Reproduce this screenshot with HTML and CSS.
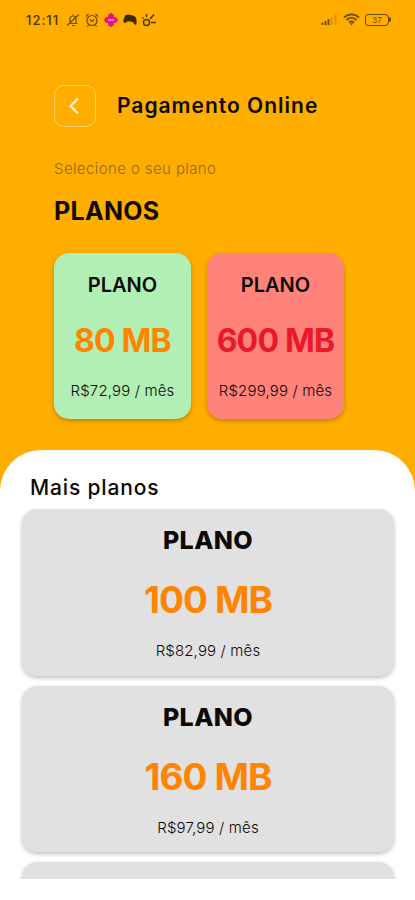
FILE: index.html
```html
<!DOCTYPE html>
<html lang="pt-BR">
<head>
    <meta charset="UTF-8">
    <meta name="viewport" content="width=device-width, initial-scale=1.0">
    <title>Pagamento Online</title>
    <link rel="stylesheet" href="styles.css">
</head>
<body>
    <div class="status">
        <span class="time">12:11</span>
        <svg class="bell" width="14" height="14" viewBox="0 0 14 14">
            <path d="M3 10.5h8.5M4 10V6a3 3 0 0 1 6 0v4M6 12.5h2.5M7 3V1.5M1 12.5L13 1.5"/>
        </svg>
        <svg class="alarm" width="14" height="14" viewBox="0 0 14 14">
            <circle cx="7" cy="7.5" r="5"/>
            <path d="M4.8 6.5L7 8.5l2.2-2M1 3.5L3.5 1M13 3.5L10.5 1M3.5 12l-1 1.5M10.5 12l1 1.5"/>
        </svg>
        <svg class="flower" width="14" height="14" viewBox="0 0 14 14">
            <path class="pink" d="M7 0l2.5 1.5.5 2.5 2.5.5L14 7l-1.5 2.5-2.5.5-.5 2.5L7 14l-2.5-1.5L4 10l-2.500-.5L0 7l1.500-2.500L4 4l.5-2.500z"/>
            <path class="mark" d="M4 7.500l1.500-1 1.500 1 1.500-1 1.500 1"/>
        </svg>
        <svg class="game" width="14" height="12" viewBox="0 0 14 12">
            <path d="M2 1.500L5 .5l5 1 2.500 1.500c1.200 2.300 1.500 5 .8 7.500-1.500.5-2.500-.5-3.300-2.500L5 7.300 2 9C.6 9 .2 8 .4 6.500z"/>
        </svg>
        <svg class="spark" width="14" height="14" viewBox="0 0 14 14">
            <circle cx="4.500" cy="9.500" r="3"/>
            <path d="M4.500 4V1M8 6l4-4.500M9 9.500h5M1.500 5.500L.5 4.500"/>
        </svg>
        <svg class="signal" width="16" height="11" viewBox="0 0 16 11">
            <path d="M1.500 11V8.500M4.500 11V7M7.500 11V5"/>
            <path class="off" d="M10.500 11V3M14.500 11V.5"/>
        </svg>
        <svg class="wifi" width="17" height="13" viewBox="0 0 17 13">
            <path d="M1 4.500c4.500-4.300 10.500-4.300 15 0M3.500 7c3-2.800 7-2.800 10 0M6 9.500c1.500-1.500 3.500-1.500 5 0"/>
            <path class="dot" d="M6.700 10.200h3.600L8.500 12.500z"/>
        </svg>
        <div class="battery"><span>37</span></div>
        <span class="tip"></span>
    </div>

    <div class="top">
        <div class="header">
            <button class="back" aria-label="Voltar">
                <svg width="12" height="18" viewBox="0 0 12 18"><path d="M10 1.500L2.500 9l7.500 7.500"/></svg>
            </button>
            <h1>Pagamento Online</h1>
        </div>
        <p class="hint">Selecione o seu plano</p>
        <h2>PLANOS</h2>
        <div class="cards">
            <div class="card green">
                <p class="name">PLANO</p>
                <p class="speed">80 MB</p>
                <p class="price">R$72,99 / mês</p>
            </div>
            <div class="card red">
                <p class="name">PLANO</p>
                <p class="speed">600 MB</p>
                <p class="price">R$299,99 / mês</p>
            </div>
        </div>
    </div>

    <div class="more">
        <h3>Mais planos</h3>
        <div class="list">
            <div class="plan">
                <p class="name">PLANO</p>
                <p class="speed">100 MB</p>
                <p class="price">R$82,99 / mês</p>
            </div>
            <div class="plan">
                <p class="name">PLANO</p>
                <p class="speed">160 MB</p>
                <p class="price">R$97,99 / mês</p>
            </div>
            <div class="plan"></div>
        </div>
    </div>
</body>
</html>
```
FILE: styles.css
```css
*{
    box-sizing: border-box;
}
body{
    margin: 0;
    height: 900px;
    display: flex;
    flex-direction: column;
    overflow: hidden;
    background-color: #ffae00;
    color: #0c0a08;
    font-family: Inter, "Open Sans", sans-serif;
}
h1, h2, h3, p{
    margin: 0;
    white-space: nowrap;
}
svg{
    fill: none;
    stroke: #6b4a08;
    stroke-width: 1.2;
    flex-shrink: 0;
}
.status{
    display: flex;
    align-items: center;
    height: 39px;
    padding: 0 24px 0 26px;
}
.time{
    width: 34px;
    margin-right: 6px;
    font-size: 13px;
    font-weight: 500;
    letter-spacing: 1px;
    color: #4a3306;
}
.alarm, .flower, .game, .spark{
    margin-left: 5px;
}
.flower .pink{
    fill: #e5118c;
    stroke: none;
}
.flower .mark{
    stroke: #ff8fd0;
}
.game path{
    fill: #3a2a08;
    stroke: none;
}
.spark{
    stroke: #4f3806;
    stroke-width: 1.5;
}
.signal{
    margin-left: auto;
    stroke-width: 1.8;
}
.signal .off{
    stroke: #d39209;
}
.wifi{
    margin: 0 5px 0 6px;
    stroke-width: 1.8;
}
.wifi .dot{
    fill: #6b4a08;
    stroke: none;
}
.battery{
    display: flex;
    align-items: center;
    justify-content: center;
    width: 24px;
    height: 12px;
    border: 1.5px solid #6b4a08;
    border-radius: 3px 4px 4px 3px;
    font-size: 8px;
    color: #6b4a08;
}
.tip{
    width: 2px;
    height: 5px;
    background-color: #6b4a08;
    border-radius: 0 2px 2px 0;
}
.top{
    height: 411px;
    padding: 46px 54px 0;
}
.header{
    display: flex;
    align-items: center;
    gap: 21px;
}
.back{
    display: flex;
    align-items: center;
    justify-content: center;
    width: 42px;
    height: 42px;
    padding: 0 2px 0 0;
    background: none;
    border: 1px solid #ffcf66;
    border-radius: 10px;
}
.back svg{
    stroke: #fff4d6;
    stroke-width: 2.2;
}
h1{
    font-size: 21px;
    line-height: 42px;
    font-weight: 600;
    letter-spacing: 1px;
}
.hint{
    margin-top: 31px;
    font-size: 15px;
    line-height: 22px;
    font-weight: 300;
    letter-spacing: 0.4px;
    color: #8d681a;
}
h2{
    margin-top: 13px;
    font-size: 25px;
    line-height: 36px;
    font-weight: 700;
    letter-spacing: 0.3px;
}
.cards{
    display: flex;
    gap: 16px;
    margin-top: 24px;
}
.card{
    width: 137px;
    height: 166px;
    padding-top: 16px;
    border-radius: 15px;
    text-align: center;
    box-shadow: 0 2px 4px rgba(0, 0, 0, 0.25);
}
.green{
    background-color: #b2efb5;
}
.red{
    background-color: #ff837b;
}
.card .name{
    font-size: 20px;
    line-height: 32px;
    font-weight: 600;
}
.speed{
    color: #ff8400;
}
.card .speed{
    margin-top: 17px;
    font-size: 32px;
    line-height: 46px;
    font-weight: 700;
    letter-spacing: -0.8px;
}
.red .speed{
    color: #e9182b;
}
.price{
    font-size: 15px;
    line-height: 24px;
    font-weight: 300;
    letter-spacing: 0.15px;
}
.card .price{
    margin-top: 15px;
}
.more{
    flex: 1;
    padding: 21px 21px 21px 22px;
    display: flex;
    flex-direction: column;
    min-height: 0;
    background-color: #fff;
    border-radius: 41px 41px 0 0;
}
h3{
    padding-left: 8px;
    font-size: 21px;
    line-height: 34px;
    font-weight: 500;
    letter-spacing: 0.85px;
}
.list{
    flex: 1;
    display: flex;
    flex-direction: column;
    gap: 10px;
    margin: 0 -6px;
    padding: 4px 6px 0;
    overflow: hidden;
}
.plan{
    flex-shrink: 0;
    height: 166.5px;
    padding-top: 13px;
    border-radius: 15px;
    background-color: #e1e1e1;
    text-align: center;
    box-shadow: 0 2px 4px rgba(0, 0, 0, 0.25);
}
.plan .name{
    font-size: 25px;
    line-height: 36px;
    font-weight: 800;
    letter-spacing: 0.4px;
}
.plan .speed{
    margin-top: 17px;
    font-size: 37px;
    line-height: 50px;
    font-weight: 700;
    letter-spacing: -0.9px;
}
.plan .price{
    margin-top: 14px;
}
```
